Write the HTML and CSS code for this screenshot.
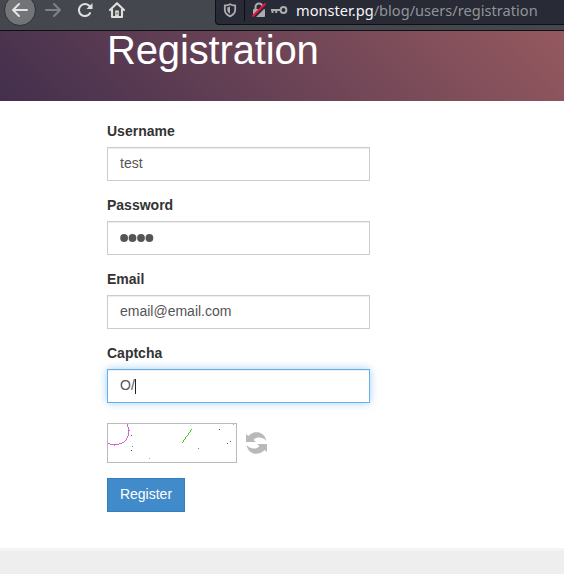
FILE: index.html
```html
<!DOCTYPE html>
<html lang="en">
<head>
<meta charset="utf-8">
<title>Registration</title>
<link rel="stylesheet" href="styles.css">
</head>
<body>
<div class="toolbar">
  <svg class="nav" width="215" height="30" viewBox="0 0 215 30" fill="none">
    <circle cx="20" cy="10" r="15.5" fill="#737477" stroke="#2f3136"/>
    <path d="M27 10H13M19 4l-6 6 6 6" stroke="#e3e3e1" stroke-width="2" stroke-linecap="round" stroke-linejoin="round"/>
    <path d="M46 10h14M54 4l6 6-6 6" stroke="#818286" stroke-width="2" stroke-linecap="round" stroke-linejoin="round"/>
    <path d="M90 13.2A6 6 0 1 1 89.2 5.8L91 7.5" stroke="#dededb" stroke-width="2.1" stroke-linecap="round"/>
    <path d="M92.5 3v6h-6z" fill="#dededb"/>
    <path d="M110 10l7-6.800 7 6.800M112 9v8h10V9" stroke="#dededb" stroke-width="2.100" stroke-linecap="round" stroke-linejoin="round"/>
    <path d="M115.200 17v-6.500h3.600V17z" fill="#dededb"/>
    <path d="M117 12.500v2" stroke="#44474d"/>
  </svg>
  <div class="urlbar">
    <svg class="status" width="80" height="24" viewBox="216 0 80 24" fill="none">
      <path d="M230 4.200c1.800 1 3.500 1.300 5.200 1.300v4.300c0 3-1.800 5-5.200 6.600-3.400-1.600-5.200-3.600-5.200-6.600V5.500c1.700 0 3.400-.3 5.200-1.300z" stroke="#adadb0" stroke-width="1.800" stroke-linejoin="round"/>
      <path d="M230 6.600v7.200c-1.700-1-2.700-2.200-2.700-4V7.500z" fill="#adadb0"/>
      <path d="M244.500 0v21" stroke="#0e0e12"/>
      <path d="M255.500 9V7a3.500 3.500 0 0 1 7 0v2" stroke="#adadb0" stroke-width="2"/>
      <rect x="253" y="9" width="12" height="8" rx="1" fill="#adadb0"/>
      <path d="M253.500 17.500l13-13" stroke="#282a35" stroke-width="3"/>
      <path d="M252.500 16.500l13-13" stroke="#ed123e" stroke-width="2"/>
      <circle cx="283.500" cy="10" r="2.900" stroke="#adadb0" stroke-width="2"/>
      <path d="M280.500 10H271M272.500 10v3M276.200 10v3" stroke="#adadb0" stroke-width="2"/>
    </svg>
    <div class="address">monster.pg<span>/blog/users/registration</span></div>
  </div>
</div>
<header class="banner"><h1>Registration</h1></header>
<main class="content">
  <div class="field"><div class="label">Username</div><div class="input">test</div></div>
  <div class="field"><div class="label">Password</div><div class="input"><svg class="dots" width="36" height="10" viewBox="0 0 36 10" fill="#555"><circle cx="4.100" cy="5" r="3.900"/><circle cx="12.500" cy="5" r="3.900"/><circle cx="21" cy="5" r="3.900"/><circle cx="29.400" cy="5" r="3.900"/></svg></div></div>
  <div class="field"><div class="label">Email</div><div class="input">email@email.com</div></div>
  <div class="field"><div class="label">Captcha</div><div class="input focused">O/<i class="caret"></i></div></div>
  <div class="captcha">
    <svg width="130" height="40" viewBox="0 0 130 40" fill="none" shape-rendering="crispEdges">
      <rect x=".5" y=".5" width="129" height="39" fill="#fff" stroke="#bbb"/>
      <path d="M1 20.500h2M3 21.500h9M12 20.500h3M15 19.500h2M17 18.500h1M18 17.500h1M19 16.500h1M19 15.500h1M20 14.500h1M20 13.500h1M21 12.500h1M21 11.500h1M21 10.500h1M21 9.500h1M21 8.500h1M21 7.500h2M21 6.500h1M21 5.500h1M21 4.500h1M20 3.500h1M20 2.500h1M20 1.500h1M7 22.500h1" stroke="#d466d4"/>
      <path d="M75 19.500h1M76 18.500h1M76 17.500h1M77 16.500h1M78 15.500h1M78 14.500h1M79 13.500h1M80 12.500h1M81 11.500h1M81 10.500h1M82 9.500h1M83 8.500h1M83 7.500h1M84 6.500h1" stroke="#43c81c"/>
      <path d="M24 12.500h1" stroke="#498014"/><path d="M25 23.500h1" stroke="#25aa99"/><path d="M24 27.500h1" stroke="#4a35c8"/><path d="M42 35.500h1" stroke="#7dd37d"/><path d="M91 25.500h1" stroke="#51a44b"/><path d="M112 6.500h1" stroke="#762be0"/><path d="M126 1.500h1" stroke="#7cd65a"/><path d="M123 18.500h1" stroke="#a6209c"/><path d="M120 20.500h1" stroke="#138728"/>
    </svg>
    <svg width="21" height="22" viewBox="0 0 21 22" fill="#b9b9b9">
      <path d="M0 2l2.500 2C7-1.500 18-2 20.500 9 17.500 5 10.500 4 7.500 8L10 10H0z"/>
      <path d="M21 20l-2.500-2C14 23.500 3 24 .5 13 3.500 17 10.500 18 13.500 14L11 12H21z"/>
    </svg>
  </div>
  <button class="register">Register</button>
</main>
<footer class="footer"></footer>
</body>
</html>
```
FILE: styles.css
```css
* { box-sizing: border-box; }
body {
  margin: 0;
  height: 574px;
  display: flex;
  flex-direction: column;
  overflow: hidden;
  background: #fff;
  color: #333;
  font: 14px/20px "Liberation Sans", Arial, sans-serif;
}
svg { display: block; flex: none; }
.toolbar {
  display: flex;
  align-items: flex-start;
  height: 31px;
  flex: none;
  background: #44474d;
  border-bottom: 1px solid #101014;
}
.urlbar {
  display: flex;
  flex: 1;
  height: 25px;
  background: #282a35;
  border: solid #101014;
  border-width: 0 0 1px 1px;
  border-bottom-left-radius: 4px;
}
.address {
  font: 14.62px/20px "Noto Sans", sans-serif;
  color: #f5f5f7;
  white-space: nowrap;
}
.address span { color: #929399; }
.banner {
  height: 70px;
  flex: none;
  padding-left: 107px;
  background: linear-gradient(45deg, #432f4d, #95595f);
}
.banner h1 {
  margin: 0;
  color: #fff;
  font-size: 40px;
  font-weight: 400;
  line-height: 39px;
  letter-spacing: -.15px;
}
.content { flex: 1; padding: 20px 0 0 107px; }
.field { width: 263px; height: 59px; margin-bottom: 15px; }
.label { font-weight: 700; margin-bottom: 6px; }
.input {
  display: flex;
  align-items: center;
  height: 34px;
  padding: 0 12px 2px;
  border: 1px solid #ccc;
  color: #555;
  box-shadow: inset 0 1px 1px rgba(0, 0, 0, .075);
}
.focused {
  border-color: #66afe9;
  box-shadow: inset 0 1px 1px rgba(0, 0, 0, .075), 0 0 8px rgba(102, 175, 233, .6);
}
.dots { margin-top: 2px; }
.caret { width: 1px; height: 15px; background: #222; margin-top: 2px; }
.captcha { display: flex; align-items: center; gap: 9px; margin: 21px 0 15px; }
.register {
  display: block;
  width: 78px;
  height: 34px;
  padding: 0 0 2px;
  border: 1px solid #357ebd;
  background: #428bca;
  color: #fff;
  font: inherit;
}
.footer {
  height: 26px;
  flex: none;
  background: #eee;
  border-top: 3px solid #f4f4f4;
}
```
